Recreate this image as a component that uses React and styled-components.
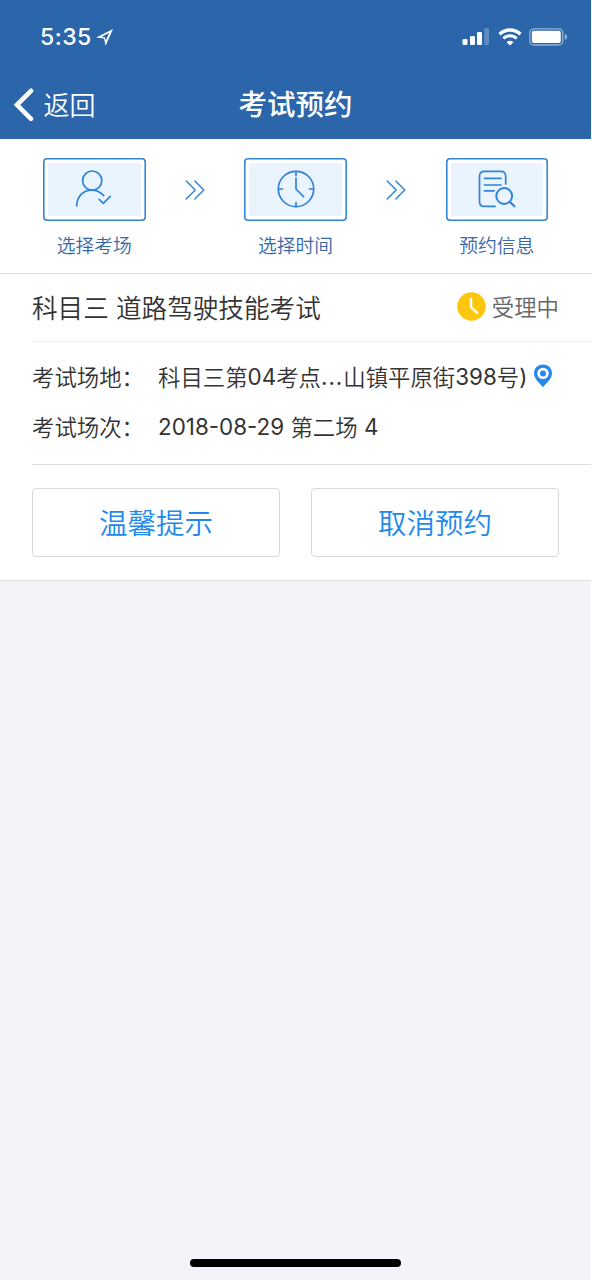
import React from 'react';
import styled, { createGlobalStyle } from 'styled-components';

const GlobalStyle = createGlobalStyle`
  * { box-sizing: border-box; }
  body { margin: 0; background: #fff; }
`;

const Screen = styled.div`
  width: 591px;
  height: 1280px;
  display: flex;
  flex-direction: column;
  overflow: hidden;
  background: #f3f3f9;
  color: #333;
  font-family: Inter, 'Noto Sans CJK SC', sans-serif;
  font-weight: 350;
  white-space: nowrap;
  svg { display: block; flex: none; }
`;

const Header = styled.header`
  height: 139px;
  flex: none;
  background: #2a66a9;
  color: #fff;
`;

const StatusBar = styled.div`
  height: 70px;
  padding: 4px 23px 0 40px;
  display: flex;
  align-items: center;
`;

const Time = styled.span`
  width: 56px;
  font-size: 23px;
  font-weight: 550;
  letter-spacing: 0.5px;
`;

const Signals = styled.div`
  margin-left: auto;
  display: flex;
  align-items: center;
  gap: 7.5px;
`;

const NavBar = styled.div`
  height: 69px;
  padding: 0 13px;
  display: grid;
  grid-template-columns: 1fr auto 1fr;
  align-items: center;
`;

const Back = styled.div`
  display: flex;
  align-items: center;
  gap: 8.5px;
  font-size: 26px;
  line-height: 38px;
`;

const BackLabel = styled.span`
  padding-top: 2px;
`;

const PageTitle = styled.h1`
  margin: 0;
  font-size: 28.5px;
  font-weight: 500;
  line-height: 40px;
`;

const Steps = styled.section`
  height: 135px;
  flex: none;
  padding: 18.5px 43px 0;
  display: flex;
  align-items: flex-start;
  justify-content: space-between;
  background: #fff;
  border-bottom: 1px solid #dedee0;
`;

const Step = styled.div`
  width: 102.5px;
  display: flex;
  flex-direction: column;
  align-items: center;
`;

const StepBox = styled.div`
  width: 102.5px;
  height: 63px;
  padding: 5px;
  border-radius: 4px;
  box-shadow: inset 0 0 0 1.6px #3485d8;
`;

const StepFill = styled.div`
  height: 100%;
  display: flex;
  align-items: center;
  justify-content: center;
  background: #e9f4ff;
  border-radius: 2px;
`;

const StepLabel = styled.span`
  margin-top: 12px;
  font-size: 18.8px;
  line-height: 28px;
  color: #3867a8;
`;

const StepArrow = styled.div`
  padding-top: 22px;
`;

const Card = styled.section`
  height: 307px;
  flex: none;
  padding-left: 32px;
  background: #fff;
  border-bottom: 1px solid #dcdce0;
`;

const CardHead = styled.div`
  height: 68px;
  padding: 0 32px 2px 0;
  display: flex;
  align-items: center;
  justify-content: space-between;
  border-bottom: 1px solid #f0f0f2;
`;

const Subject = styled.h2`
  margin: 0;
  padding-top: 4px;
  font-size: 25.6px;
  line-height: 38px;
  font-weight: 350;
`;

const Status = styled.div`
  display: flex;
  align-items: center;
  gap: 6px;
  font-size: 22.4px;
  line-height: 32px;
  color: #666;
`;

const StatusText = styled.span`
  padding-top: 2px;
`;

const Details = styled.div`
  height: 123px;
  padding-top: 9px;
  border-bottom: 1px solid #dcdcdf;
`;

const Row = styled.div`
  height: 50px;
  display: flex;
  align-items: center;
  font-size: 22.4px;
`;

const RowLabel = styled.span`
  width: 126px;
`;

const RowValue = styled.span`
  display: flex;
  align-items: center;
`;

const Latin = styled.span`
  font-weight: 390;
  letter-spacing: ${(p) => p.$spacing || 0}px;
  white-space: pre;
`;

const PinSlot = styled.span`
  padding: 0 0 0 5px;
`;

const Actions = styled.div`
  padding: 23px 32px 0 0;
  display: grid;
  grid-template-columns: 1fr 1fr;
  gap: 31px;
`;

const ActionButton = styled.button`
  height: 69px;
  padding: 2px 0 0;
  border: 1px solid #d9d9dc;
  border-radius: 4px;
  background: #fff;
  color: #2089ed;
  font-family: inherit;
  font-size: 28.5px;
  line-height: 40px;
  font-weight: inherit;
`;

const HomeBar = styled.div`
  width: 211px;
  height: 8px;
  margin: auto auto 13px 190px;
  border-radius: 4px;
  background: #000;
`;

const LocationIcon = () => (
  <svg width="17" height="18" viewBox="0 0 17 18">
    <path
      fillRule="evenodd"
      fill="#fff"
      d="M17 1 L0.2 9.6 L8 10.6 L9.6 17.8 Z M13.2 4.8 L9.9 12.6 L9.2 9.4 L5.8 8.7 Z"
    />
  </svg>
);

const SignalIcon = () => (
  <svg width="28" height="18" viewBox="0 0 28 18" fill="#fff">
    <rect x="0.5" y="11" width="5" height="6" rx="1.3" />
    <rect x="8" y="8" width="5" height="9" rx="1.3" />
    <rect x="15" y="4" width="5" height="13" rx="1.3" />
    <rect x="22.3" y="0" width="4.7" height="17" rx="1.3" opacity="0.25" />
  </svg>
);

const WifiIcon = () => (
  <svg width="24" height="18" viewBox="0 0 24 18" fill="none" stroke="#fff">
    <path d="M1.6 6.2 A15 15 0 0 1 22.4 6.2" strokeWidth="3.4" />
    <path d="M5.4 10.5 A9.4 9.4 0 0 1 18.6 10.5" strokeWidth="3" />
    <path d="M12 17.6 L8.6 14.2 A4.9 4.9 0 0 1 15.4 14.2 Z" fill="#fff" stroke="none" />
  </svg>
);

const BatteryIcon = () => (
  <svg width="39" height="18" viewBox="0 0 39 18">
    <rect x="0.8" y="0.8" width="33" height="16.2" rx="4.3" fill="none" stroke="#fff" strokeOpacity="0.5" strokeWidth="1.3" />
    <rect x="2.8" y="2.8" width="29" height="12.2" rx="2" fill="#fff" />
    <path d="M35.8 6 Q38 6.6 38 8.9 Q38 11.2 35.8 11.8 Z" fill="#fff" fillOpacity="0.55" />
  </svg>
);

const BackIcon = () => (
  <svg width="22" height="34" viewBox="0 0 22 34">
    <path d="M18 2.8 L4 16.8 L18 30.8" fill="none" stroke="#fff" strokeWidth="4.6" strokeLinecap="round" strokeLinejoin="miter" />
  </svg>
);

const lineProps = { fill: 'none', stroke: '#2f83da', strokeWidth: 1.7, strokeLinecap: 'round', strokeLinejoin: 'round' };

const PersonIcon = () => (
  <svg width="38" height="38" viewBox="0 0 38 38" {...lineProps}>
    <circle cx="17.2" cy="10.6" r="9.6" />
    <path d="M1.7 35.8 C1.7 27 8 20.2 16.5 20.2 C21.5 20.2 25.7 22.3 28.7 25.6" />
    <path d="M24.1 29.4 L28.3 33.4 L35.3 26.4" />
  </svg>
);

const ClockIcon = () => (
  <svg width="38" height="38" viewBox="0 0 38 38" {...lineProps}>
    <circle cx="19" cy="19" r="17.7" />
    <path d="M19 1.5 V5.5 M19 32.5 V36.5 M1.5 19 H5.5 M32.5 19 H36.5" />
    <path d="M19 7.5 V19 L27 27.2" strokeLinecap="butt" />
  </svg>
);

const DocumentIcon = () => (
  <svg width="38" height="38" viewBox="0 0 38 38" {...lineProps}>
    <path d="M17 36.4 H6.5 Q1.5 36.4 1.5 31.4 V6.3 Q1.5 1.3 6.5 1.3 H22.7 Q27.7 1.3 27.7 6.3 V14" />
    <path d="M6.5 8.4 H23 M6.5 15 H23 M6.5 20.8 H16" />
    <circle cx="26.2" cy="26" r="7.9" strokeWidth="2" />
    <path d="M32.3 32.2 L36.4 36.3" strokeWidth="2.2" />
  </svg>
);

const DoubleChevron = () => (
  <svg width="20" height="20" viewBox="0 0 20 20" {...lineProps} strokeWidth="1.4">
    <path d="M1.2 1 L10.2 10 L1.2 19 M9.8 1 L18.8 10 L9.8 19" />
  </svg>
);

const PendingIcon = () => (
  <svg width="29" height="29" viewBox="0 0 29 29">
    <circle cx="14.5" cy="14.5" r="14.2" fill="#fdc50b" />
    <path d="M14 7 V15.2 L20.2 21" fill="none" stroke="#fff" strokeWidth="2.5" strokeLinecap="round" strokeLinejoin="round" />
  </svg>
);

const PinIcon = () => (
  <svg width="20" height="24" viewBox="0 0 20 24">
    <path fillRule="evenodd" fill="#2687ec" d="M10 0.5 C4.7 0.5 1 4.4 1 9.3 C1 14.8 6 18.5 10 23.3 C14 18.5 19 14.8 19 9.3 C19 4.4 15.3 0.5 10 0.5 Z M10 3.7 A5.7 5.7 0 1 1 10 15.1 A5.7 5.7 0 1 1 10 3.7 Z" />
    <circle cx="10" cy="9.4" r="3" fill="#2687ec" />
  </svg>
);

const steps = [
  { label: '选择考场', Icon: PersonIcon },
  { label: '选择时间', Icon: ClockIcon },
  { label: '预约信息', Icon: DocumentIcon },
];

export default function App() {
  return (
    <>
      <GlobalStyle />
      <Screen>
        <Header>
          <StatusBar>
            <Time>5:35</Time>
            <LocationIcon />
            <Signals>
              <SignalIcon />
              <WifiIcon />
              <BatteryIcon />
            </Signals>
          </StatusBar>
          <NavBar>
            <Back>
              <BackIcon />
              <BackLabel>返回</BackLabel>
            </Back>
            <PageTitle>考试预约</PageTitle>
          </NavBar>
        </Header>
        <Steps>
          {steps.map(({ label, Icon }, i) => (
            <React.Fragment key={label}>
              {i > 0 && (
                <StepArrow>
                  <DoubleChevron />
                </StepArrow>
              )}
              <Step>
                <StepBox>
                  <StepFill>
                    <Icon />
                  </StepFill>
                </StepBox>
                <StepLabel>{label}</StepLabel>
              </Step>
            </React.Fragment>
          ))}
        </Steps>
        <Card>
          <CardHead>
            <Subject>科目三 道路驾驶技能考试</Subject>
            <Status>
              <PendingIcon />
              <StatusText>受理中</StatusText>
            </Status>
          </CardHead>
          <Details>
            <Row>
              <RowLabel>考试场地：</RowLabel>
              <RowValue>
                科目三第<Latin>04</Latin>考点<Latin $spacing={1}>...</Latin>山镇平原街<Latin>398</Latin>号<Latin $spacing={1}>)</Latin>
                <PinSlot>
                  <PinIcon />
                </PinSlot>
              </RowValue>
            </Row>
            <Row>
              <RowLabel>考试场次：</RowLabel>
              <RowValue>
                <Latin>2018-08-29 </Latin>第二场<Latin> 4</Latin>
              </RowValue>
            </Row>
          </Details>
          <Actions>
            <ActionButton>温馨提示</ActionButton>
            <ActionButton>取消预约</ActionButton>
          </Actions>
        </Card>
        <HomeBar />
      </Screen>
    </>
  );
}
